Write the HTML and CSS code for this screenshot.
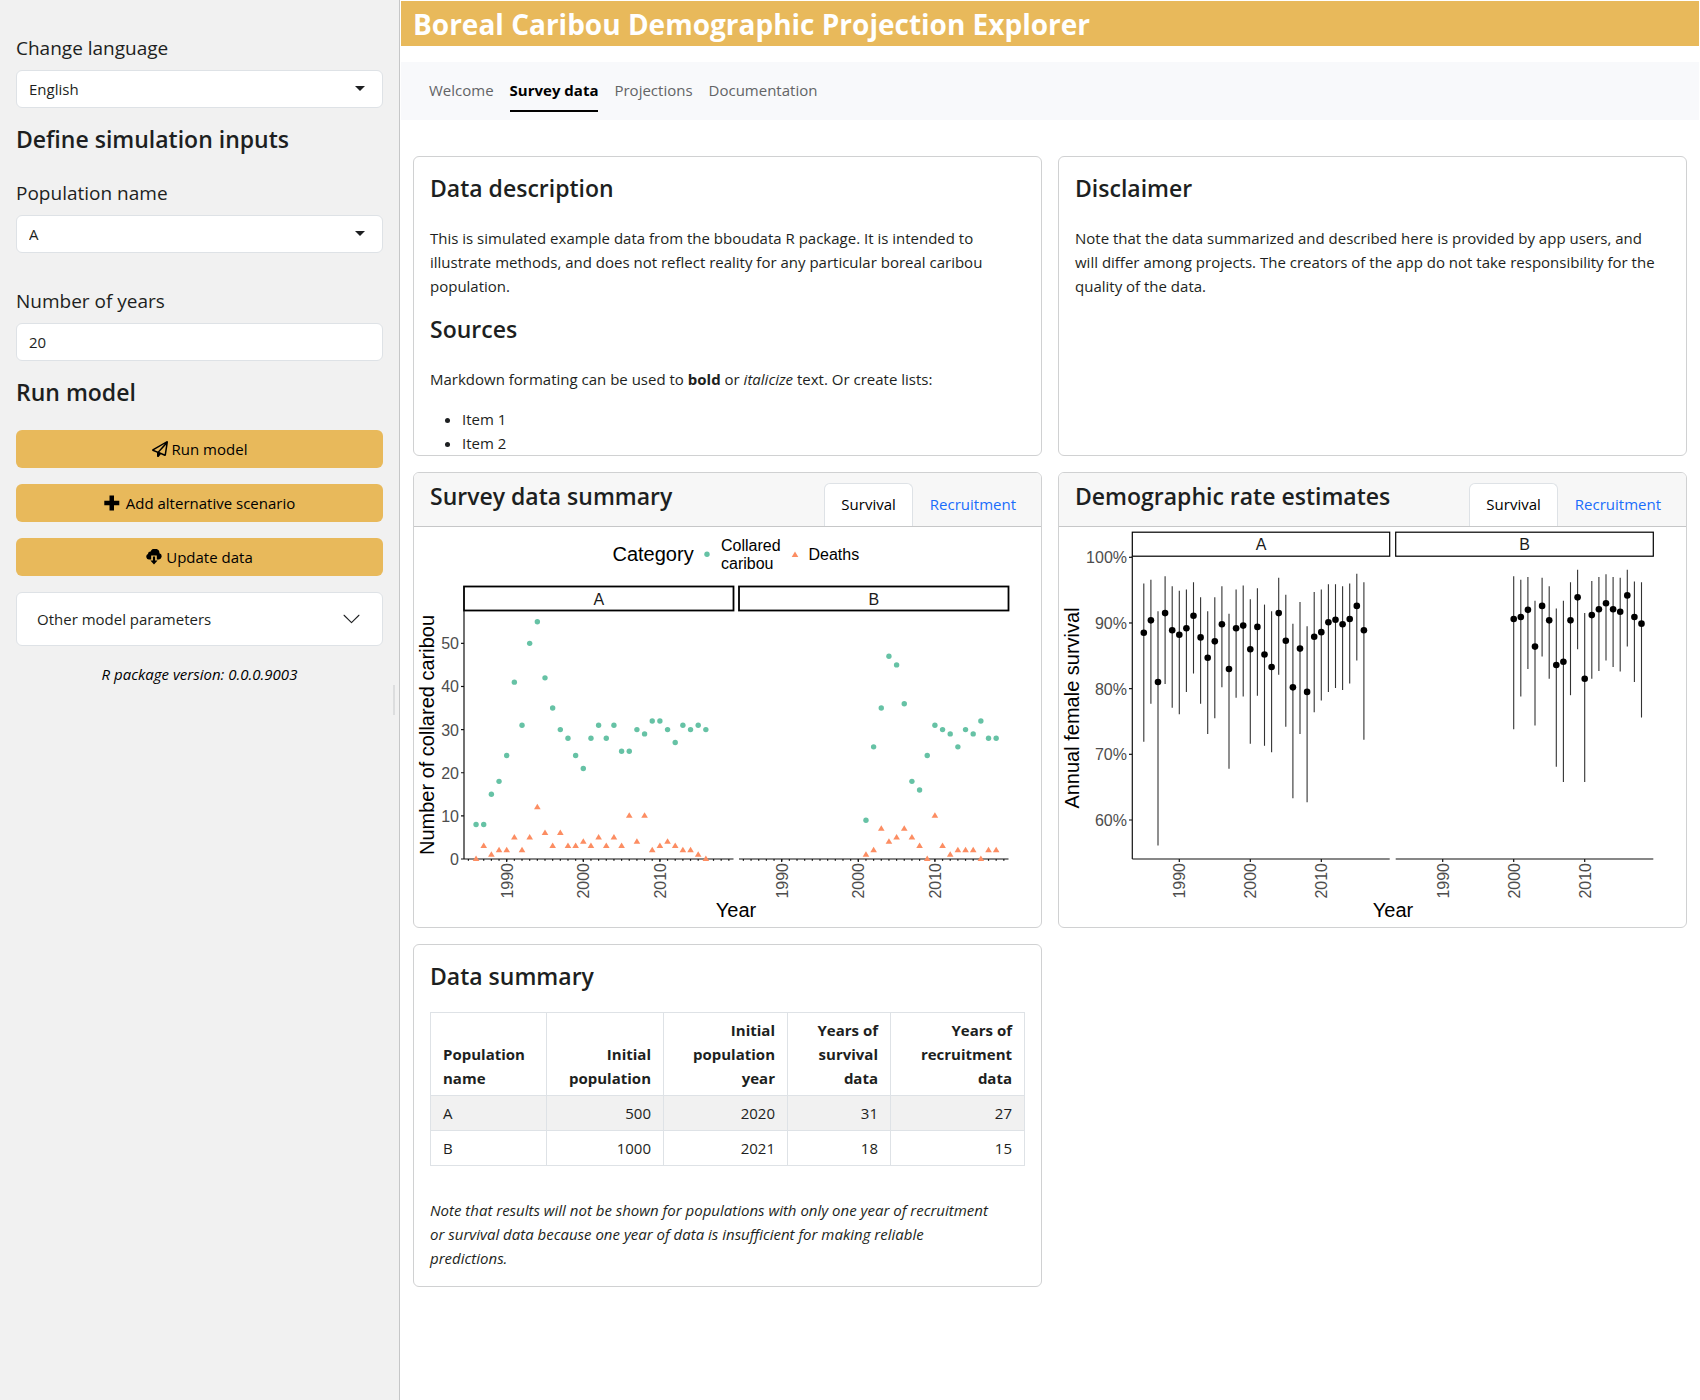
FILE: index.html
```html
<!DOCTYPE html>
<html lang="en">
<head>
<meta charset="utf-8">
<title>Boreal Caribou Demographic Projection Explorer</title>
<link rel="stylesheet" href="styles.css">
</head>
<body>
<div class="layout">
  <aside class="sidebar">
    <div class="field">
      <label class="field-label" for="lang">Change language</label>
      <div class="select-wrap">
        <select class="control" id="lang"><option>English</option><option>French</option></select>
      </div>
    </div>
    <h2 class="heading">Define simulation inputs</h2>
    <div class="field field-spaced">
      <label class="field-label" for="pop">Population name</label>
      <div class="select-wrap">
        <select class="control" id="pop"><option>A</option><option>B</option></select>
      </div>
    </div>
    <div class="field">
      <label class="field-label" for="years">Number of years</label>
      <input class="control" id="years" type="text" inputmode="numeric" value="20">
    </div>
    <h2 class="heading">Run model</h2>
    <div class="actions">
      <button class="btn" type="button">
        <svg class="icon" viewBox="0 0 512 512" aria-hidden="true"><path d="M16.1 260.2c-22.6 12.9-20.5 47.3 3.6 57.3L160 376V479.3c0 18.100 14.600 32.700 32.700 32.700c9.700 0 18.900-4.300 25.100-11.800l62-74.300 123.900 51.600c18.900 7.900 40.800-4.500 43.900-24.700l64-416c1.900-12.100-3.400-24.300-13.500-31.200s-23.300-7.500-34-1.400l-448 256zm52.100 25.500L409.700 90.600 190.100 336l1.200 1L68.200 285.700zM403.300 425.400L236.700 355.900 450.800 116.600 403.300 425.400z"/></svg>
        <span>Run model</span>
      </button>
      <button class="btn btn-plus" type="button">
        <svg class="icon" viewBox="0 0 16 16" aria-hidden="true"><path d="M5.500 .5h4.500v5.200h5.300v4.500H10v5.200H5.500v-5.200H.3V5.700h5.200z"/></svg>
        <span>Add alternative scenario</span>
      </button>
      <button class="btn" type="button">
        <svg class="icon" viewBox="0 0 16 16" aria-hidden="true"><path d="M5.200 6.500h5.600v4h2.200A3.200 3.200 0 0 0 13.500 4.300 4.600 4.600 0 0 0 4.600 2.600 2.700 2.700 0 0 0 1.900 5 2.900 2.900 0 0 0 3 10.500h2.200z"/><path d="M6.900 7.500h2.200v4h2.500L8 15.500l-3.600-4h2.500z"/></svg>
        <span>Update data</span>
      </button>
    </div>
    <button class="accordion" type="button" aria-expanded="false">
      <span>Other model parameters</span>
      <svg class="chevron" viewBox="0 0 16 16" aria-hidden="true"><path d="M1 4l7 7 7-7"/></svg>
    </button>
    <p class="version">R package version: 0.0.0.9003</p>
    <div class="resize-handle"></div>
  </aside>

  <main class="main">
    <h1 class="title">Boreal Caribou Demographic Projection Explorer</h1>
    <nav class="nav">
      <a class="nav-link" href="#welcome">Welcome</a>
      <a class="nav-link active" href="#survey">Survey data</a>
      <a class="nav-link" href="#projections">Projections</a>
      <a class="nav-link" href="#documentation">Documentation</a>
    </nav>

    <div class="cards">
      <section class="card card-text">
        <h3 class="heading">Data description</h3>
        <p class="para">This is simulated example data from the bboudata R package. It is intended to illustrate methods, and does not reflect reality for any particular boreal caribou population.</p>
        <h3 class="heading">Sources</h3>
        <p class="para">Markdown formating can be used to <strong>bold</strong> or <em>italicize</em> text. Or create lists:</p>
        <ul class="list"><li>Item 1</li><li>Item 2</li></ul>
      </section>

      <section class="card card-text">
        <h3 class="heading">Disclaimer</h3>
        <p class="para">Note that the data summarized and described here is provided by app users, and will differ among projects. The creators of the app do not take responsibility for the quality of the data.</p>
      </section>

      <section class="card">
        <header class="card-header">
          <h3 class="heading">Survey data summary</h3>
          <nav class="tabs"><a class="tab active" href="#s1">Survival</a><a class="tab" href="#r1">Recruitment</a></nav>
        </header>
        <svg class="chart" id="survey-chart" viewBox="0 0 627 400" role="img" aria-label="Number of collared caribou and deaths by year"></svg>
      </section>

      <section class="card">
        <header class="card-header">
          <h3 class="heading">Demographic rate estimates</h3>
          <nav class="tabs"><a class="tab active" href="#s2">Survival</a><a class="tab" href="#r2">Recruitment</a></nav>
        </header>
        <svg class="chart" id="rate-chart" viewBox="0 0 627 400" role="img" aria-label="Annual female survival by year"></svg>
      </section>

      <section class="card card-text">
        <h3 class="heading heading-table">Data summary</h3>
        <table class="table">
          <thead>
            <tr><th class="c1">Population name</th><th class="c2">Initial population</th><th class="c3">Initial population year</th><th class="c4">Years of survival data</th><th class="c5">Years of recruitment data</th></tr>
          </thead>
          <tbody>
            <tr><td>A</td><td>500</td><td>2020</td><td>31</td><td>27</td></tr>
            <tr><td>B</td><td>1000</td><td>2021</td><td>18</td><td>15</td></tr>
          </tbody>
        </table>
        <p class="note"><em>Note that results will not be shown for populations with only one year of recruitment or survival data because one year of data is insufficient for making reliable predictions.</em></p>
      </section>
    </div>
  </main>
</div>
<script src="charts.js"></script>
</body>
</html>
```
FILE: styles.css
```css
* { box-sizing: border-box; }

body {
  margin: 0;
  background: #fff;
  color: #1d1f21;
  font-family: "Open Sans", "Noto Sans", sans-serif;
  font-size: 15px;
  line-height: 24px;
}

h1, h2, h3, p, ul { margin: 0; }

.layout {
  display: grid;
  grid-template-columns: 400px minmax(0, 1fr);
  min-height: 100vh;
}

/* Sidebar */
.sidebar {
  position: relative;
  padding: 32px 16px;
  background: #f1f1f1;
  border-right: 1px solid #c6c7c8;
}

.field { padding-bottom: 16px; }
.field-spaced { padding-bottom: 32px; }

.field-label {
  display: block;
  margin-bottom: 6px;
  font-size: 19px;
  line-height: 32px;
}

.select-wrap { position: relative; }
.select-wrap::after {
  content: "";
  position: absolute;
  top: 16px;
  right: 18px;
  border: 5px solid transparent;
  border-top-color: #1d1f21;
  border-bottom: 0;
  pointer-events: none;
}

.control {
  display: block;
  width: 100%;
  height: 38px;
  padding: 0 12px;
  appearance: none;
  background: #fff;
  border: 1px solid #dee2e6;
  border-radius: 6px;
  color: #1d1f21;
  font: inherit;
}

.heading {
  margin-bottom: 22px;
  font-size: 23px;
  font-weight: 600;
  line-height: 31px;
}

.actions {
  display: grid;
  gap: 16px;
}

.btn {
  display: flex;
  align-items: center;
  justify-content: center;
  gap: 4px;
  height: 38px;
  background: #e8b95b;
  border: 0;
  border-radius: 6px;
  color: #000;
  font: inherit;
}
.btn-plus { gap: 6px; }

.icon {
  width: 16px;
  height: 16px;
  fill: currentColor;
}

.accordion {
  display: flex;
  align-items: center;
  justify-content: space-between;
  width: 100%;
  height: 54px;
  margin: 16px 0;
  padding: 0 22px 0 20px;
  background: #fff;
  border: 1px solid #dee2e6;
  border-radius: 6px;
  color: #1d1f21;
  font: inherit;
}

.chevron {
  width: 17px;
  height: 17px;
  fill: none;
  stroke: #1d1f21;
  stroke-linecap: round;
  stroke-linejoin: round;
}

.version {
  color: #000;
  font-style: italic;
  text-align: center;
}

.resize-handle {
  position: absolute;
  top: 50%;
  right: 4px;
  width: 2px;
  height: 30px;
  margin-top: -15px;
  background: #dcddde;
}

/* Main column */
.main { padding: 1px; }

.title {
  padding: 1px 12px 0;
  background: #e8b95b;
  color: #fff;
  font-size: 28px;
  font-weight: 700;
  line-height: 44px;
}

.nav {
  display: flex;
  gap: 16px;
  margin-top: 16px;
  padding: 8px 28px;
  background: #f8f9fb;
}

.nav-link {
  padding: 8px 0;
  border-bottom: 2px solid transparent;
  color: #636466;
  line-height: 24px;
  text-decoration: none;
}
.nav-link.active {
  border-color: #000;
  color: #000;
  font-weight: 700;
}

.cards {
  display: grid;
  grid-template-columns: repeat(2, minmax(0, 1fr));
  grid-template-rows: 300px auto auto;
  gap: 16px;
  padding: 36px 12px;
}

.card {
  overflow: hidden;
  background: #fff;
  border: 1px solid #d0d1d2;
  border-radius: 6px;
}

.card-text { padding: 16px; }

.para {
  margin-bottom: 16px;
  padding-right: 6px;
}

.list { padding-left: 32px; }

.card-header {
  display: flex;
  justify-content: space-between;
  height: 54px;
  padding: 0 8px 0 16px;
  background: #f7f7f7;
  border-bottom: 1px solid #c6c7c8;
}
.card-header .heading { margin: 8px 0 0; }

.tabs {
  display: flex;
  align-items: flex-end;
}

.tab {
  padding: 8px 16px 10px;
  border: 1px solid transparent;
  border-bottom: 0;
  border-radius: 6px 6px 0 0;
  color: #1a6dfb;
  text-decoration: none;
}
.tab.active {
  background: #fff;
  border-color: #dee2e6;
  color: #000;
}

/* Table */
.heading-table { margin-bottom: 20px; }

.table {
  width: 100%;
  table-layout: fixed;
  border-collapse: collapse;
}
.table th, .table td {
  padding: 5px 12px;
  border: 1px solid #dee2e6;
  text-align: right;
}
.table th { vertical-align: bottom; font-weight: 700; }
.table th:first-child, .table td:first-child { text-align: left; }
.table tbody tr:first-child { background: #f1f1f1; }
.c1 { width: 116px; }
.c2 { width: 117px; }
.c3 { width: 124px; }
.c4 { width: 103px; }

.note { padding: 32px 24px 0 0; }

/* Charts */
.chart {
  display: block;
  width: 100%;
  font-family: "Liberation Sans", Arial, sans-serif;
}
.axis-title { font-size: 20px; fill: #000; }
.legend-text { font-size: 16px; fill: #000; }
.strip-text { font-size: 16px; fill: #1a1a1a; }
.tick-text { font-size: 16px; fill: #4d4d4d; }
.axis { stroke: #111; stroke-width: 1.2; fill: none; }
.strip { stroke: #000; fill: #fff; }
.range { stroke: #333; stroke-width: 1.1; }
.live { fill: #66c2a5; }
.dead { fill: #fc8d62; }
```
FILE: charts.js
```js
const NS = "http://www.w3.org/2000/svg";

function add(svg, tag, attrs, text) {
  const el = document.createElementNS(NS, tag);
  for (const key in attrs) el.setAttribute(key, attrs[key]);
  if (text !== undefined) el.textContent = text;
  svg.appendChild(el);
}

function line(svg, x1, y1, x2, y2, cls) {
  add(svg, "line", { x1, y1, x2, y2, class: cls });
}

function label(svg, x, y, text, cls, anchor, rotate) {
  const attrs = { x, y, class: cls, "text-anchor": anchor };
  if (rotate) attrs.transform = `rotate(-90 ${x} ${y})`;
  add(svg, "text", attrs, text);
}

function triangle(svg, x, y) {
  add(svg, "path", { d: `M${x} ${y - 3.5}l3.300 5.500h-6.600z`, class: "dead" });
}

// Panel frame: strip with the population name, x axis and its year labels
function panel(svg, p, stripTop, strokeWidth, base) {
  add(svg, "rect", { x: p.left, y: stripTop, width: p.right - p.left, height: 24, class: "strip", "stroke-width": strokeWidth });
  label(svg, (p.left + p.right) / 2, stripTop + 18, p.name, "strip-text", "middle");
  line(svg, p.left, base, p.right, base, "axis");
  for (const year of [1990, 2000, 2010]) {
    line(svg, p.x(year), base, p.x(year), base + 3, "axis");
    label(svg, p.x(year) + 6, base + 4, year, "tick-text", "end", true);
  }
}

function surveyChart() {
  const svg = document.getElementById("survey-chart");
  const base = 332;
  const y = v => base - v * 4.313;
  const panels = [
    { name: "A", left: 50, right: 319.5, x: t => 92.7 + (t - 1990) * 7.66, start: 1986,
      live: [8, 8, 15, 18, 24, 41, 31, 50, 55, 42, 35, 30, 28, 24, 21, 28, 31, 28, 31, 25, 25, 30, 29, 32, 32, 30, 27, 31, 30, 31, 30],
      dead: [0, 3, 1, 2, 2, 5, 2, 5, 12, 6, 3, 6, 3, 3, 4, 3, 5, 3, 5, 3, 10, 4, 10, 2, 3, 4, 3, 2, 2, 1, 0] },
    { name: "B", left: 325, right: 594.5, x: t => 367.7 + (t - 1990) * 7.66, start: 2001,
      live: [9, 26, 35, 47, 45, 36, 18, 16, 24, 31, 30, 29, 26, 30, 29, 32, 28, 28],
      dead: [1, 2, 7, 4, 5, 7, 5, 3, 0, 10, 3, 1, 2, 2, 2, 0, 2, 2] }
  ];
  for (const p of panels) {
    panel(svg, p, 59.5, 1.8, base);
    for (let t = 1985; t < 2020; t++) line(svg, p.x(t), base, p.x(t), base + 1.8, "axis");
    p.live.forEach((v, i) => add(svg, "circle", { cx: p.x(p.start + i), cy: y(v), r: 2.7, class: "live" }));
    p.dead.forEach((v, i) => triangle(svg, p.x(p.start + i), y(v)));
  }
  line(svg, 50, 84, 50, base, "axis");
  for (let v = 0; v <= 50; v += 10) {
    line(svg, 47, y(v), 50, y(v), "axis");
    label(svg, 45, y(v) + 6, v, "tick-text", "end");
  }
  label(svg, 20, 208, "Number of collared caribou", "axis-title", "middle", true);
  label(svg, 322, 390, "Year", "axis-title", "middle");
  label(svg, 198.5, 34.3, "Category", "axis-title", "start");
  add(svg, "circle", { cx: 293, cy: 27.3, r: 2.7, class: "live" });
  label(svg, 307, 24.3, "Collared", "legend-text", "start");
  label(svg, 307, 41.6, "caribou", "legend-text", "start");
  triangle(svg, 381, 28);
  label(svg, 394.5, 33.3, "Deaths", "legend-text", "start");
}

function rateChart() {
  const svg = document.getElementById("rate-chart");
  const base = 332;
  const y = v => 30.3 + (100 - v) * 6.567;
  // Each entry: estimate, upper limit, lower limit
  const panels = [
    { name: "A", left: 73.3, right: 330.7, x: t => 120.3 + (t - 1990) * 7.1, start: 1985, data: [
      [88.5, 96.0, 71.9], [90.4, 96.6, 77.7], [81.0, 91.8, 56.1], [91.5, 97.1, 80.7], [88.9, 95.6, 77.1],
      [88.2, 94.9, 76.1], [89.2, 95.1, 79.5], [91.1, 96.2, 82.3], [87.8, 93.9, 77.7], [84.7, 91.8, 73.1],
      [87.2, 93.9, 75.5], [89.8, 95.6, 80.2], [83.0, 91.4, 67.8], [89.2, 95.1, 78.6], [89.6, 95.7, 78.8],
      [86.0, 93.6, 71.6], [89.4, 95.3, 78.9], [85.2, 92.8, 71.3], [83.3, 91.8, 70.3], [91.5, 96.9, 82.1],
      [87.3, 94.3, 74.2], [80.2, 89.9, 63.3], [86.1, 93.2, 73.1], [79.5, 89.5, 62.7], [87.9, 94.7, 76.4],
      [88.6, 95.1, 78.2], [90.1, 95.9, 79.5], [90.5, 95.9, 80.1], [89.8, 95.6, 79.8], [90.6, 96.0, 80.8],
      [92.6, 97.5, 84.3], [88.9, 96.2, 72.2]] },
    { name: "B", left: 336.7, right: 594.3, x: t => 383.7 + (t - 1990) * 7.1, start: 2000, data: [
      [90.6, 97.1, 73.8], [90.9, 96.6, 78.8], [92.0, 97.0, 83.0], [86.4, 93.4, 74.4], [92.6, 96.9, 84.9],
      [90.4, 95.6, 81.5], [83.6, 92.2, 68.1], [84.1, 93.4, 65.8], [90.4, 96.2, 79.0], [93.9, 98.1, 86.0],
      [81.5, 91.5, 65.8], [91.2, 96.4, 81.5], [92.1, 97.0, 82.7], [93.0, 97.4, 84.3], [92.1, 97.0, 83.3],
      [91.7, 96.9, 82.6], [94.2, 98.1, 86.4], [90.9, 96.3, 81.0], [89.9, 96.2, 75.6]] }
  ];
  for (const p of panels) {
    panel(svg, p, 5.2, 1.2, base);
    p.data.forEach(([mid, hi, lo], i) => {
      const x = p.x(p.start + i);
      line(svg, x, y(hi), x, y(lo), "range");
      add(svg, "circle", { cx: x, cy: y(mid), r: 3.3 });
    });
  }
  line(svg, 73.3, 29, 73.3, base, "axis");
  for (let v = 60; v <= 100; v += 10) {
    line(svg, 70, y(v), 73, y(v), "axis");
    label(svg, 68, y(v) + 6, v + "%", "tick-text", "end");
  }
  label(svg, 20, 181, "Annual female survival", "axis-title", "middle", true);
  label(svg, 334, 390, "Year", "axis-title", "middle");
}

surveyChart();
rateChart();
```
